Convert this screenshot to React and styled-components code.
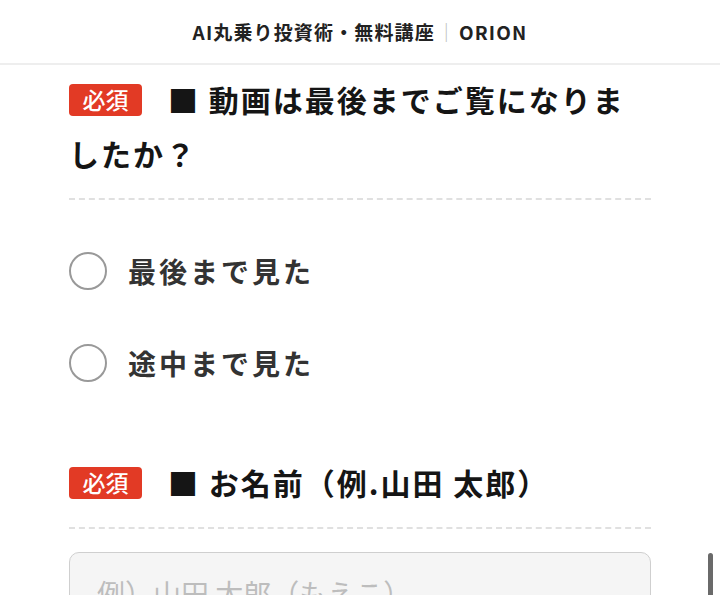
import React from 'react';
import styled, { createGlobalStyle } from 'styled-components';

const GlobalStyle = createGlobalStyle`
	html, body {
		margin: 0;
		padding: 0;
		background: #fff;
		overflow: hidden;
	}
	body {
		font-family: "Noto Sans CJK JP", "Noto Sans", sans-serif;
		color: #1a1a1a;
	}
`;

const Header = styled.header`
	height: 63px;
	display: flex;
	align-items: center;
	justify-content: center;
	border-bottom: 2px solid #eeeeee;
	font-size: 19px;
	font-weight: 700;
	color: #222;
	letter-spacing: 0.06em;

	.sep {
		color: #bbb;
		font-weight: 400;
		margin: 0 2px;
	}
`;

const Content = styled.main`
	padding: 7px 69px 0;
`;

const Section = styled.section`
	margin-top: ${(p) => p.gap || 0}px;
`;

const Heading = styled.h2`
	margin: 0;
	font-size: 30px;
	font-weight: 700;
	line-height: 54px;
	letter-spacing: 2px;
	color: #151515;
	padding-bottom: 18px;
	border-bottom: 2px dashed #e0e0e0;
`;

const Badge = styled.span`
	display: inline-flex;
	align-items: center;
	justify-content: center;
	vertical-align: 3px;
	width: 73px;
	height: 32px;
	margin-right: 26px;
	background: #e23a25;
	color: #fff;
	border-radius: 4px;
	font-size: 23px;
	font-weight: 500;
	letter-spacing: 0;
	line-height: 1;
`;

const RadioList = styled.div`
	margin-top: 25px;
	display: flex;
	flex-direction: column;
`;

const RadioRow = styled.label`
	height: 92px;
	display: flex;
	align-items: center;
	gap: 21px;
	font-size: 28px;
	font-weight: 700;
	letter-spacing: 3px;
	color: #333;
`;

const Circle = styled.span`
	box-sizing: border-box;
	width: 38px;
	height: 38px;
	border-radius: 50%;
	border: 2.5px solid #999;
	background: #fff;
	flex-shrink: 0;
`;

const TextInput = styled.div`
	margin-top: 23px;
	height: 90px;
	box-sizing: border-box;
	border: 1.5px solid #cfcfcf;
	border-radius: 10px;
	background: #f5f5f5;
	padding: 20px 27px;
	font-size: 28px;
	color: #bdbdbd;
	white-space: nowrap;
`;

const ScrollThumb = styled.div`
	position: fixed;
	right: 7px;
	top: 553px;
	width: 5px;
	height: 80px;
	border-radius: 3px;
	background: #6a6a6a;
`;

const options = ['最後まで見た', '途中まで見た'];

const App = () => {
	return (
		<>
			<GlobalStyle />
			<Header>
				AI丸乗り投資術・無料講座<span className='sep'>｜</span>ORION
			</Header>
			<Content>
				<Section>
					<Heading>
						<Badge>必須</Badge>■ 動画は最後までご覧になりましたか？
					</Heading>
					<RadioList>
						{options.map((item) => (
							<RadioRow key={item}>
								<Circle />
								{item}
							</RadioRow>
						))}
					</RadioList>
				</Section>
				<Section gap={46}>
					<Heading>
						<Badge>必須</Badge>■ お名前（例.山田 太郎）
					</Heading>
					<TextInput>例）山田 太郎（もえこ）</TextInput>
				</Section>
			</Content>
			<ScrollThumb />
		</>
	);
};

export default App;
